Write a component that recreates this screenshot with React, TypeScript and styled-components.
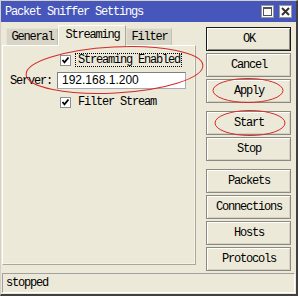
import React from "react";
import styled, { createGlobalStyle } from "styled-components";

const Global = createGlobalStyle`
  html, body { margin: 0; padding: 0; background: #ece9d8; }
  body { width: 298px; height: 296px; overflow: hidden; }
  * { box-sizing: border-box; }
`;

const mono = `"Liberation Mono", "DejaVu Sans Mono", monospace`;

const Window = styled.div`
  position: relative;
  width: 298px;
  height: 296px;
  background: #ece9d8;
  border-top: 1px solid #d4d0c8;
  border-left: 1px solid #d4d0c8;
  border-right: 2px solid #404040;
  border-bottom: 2px solid #404040;
  display: flex;
  flex-direction: column;
  font-family: ${mono};
  font-size: 12px;
  letter-spacing: -1.2px;
  color: #000;
`;

const TitleBar = styled.div`
  height: 21px;
  flex: none;
  background: #4656ba;
  display: flex;
  align-items: center;
  justify-content: space-between;
  padding: 0 4px 0 4px;
  color: #fff;
`;

const TitleText = styled.span`
  font-size: 12px;
  padding-top: 1px;
`;

const TitleButtons = styled.div`
  display: flex;
  gap: 5px;
`;

const TitleButton = styled.div`
  width: 13px;
  height: 13px;
  background: #fff;
  border: 1px solid #9a9a9a;
  display: flex;
  align-items: center;
  justify-content: center;
`;

const Main = styled.div`
  flex: 1;
  display: flex;
  min-height: 0;
`;

const LeftCol = styled.div`
  width: 194px;
  margin-left: 1px;
  display: flex;
  flex-direction: column;
  padding-bottom: 8px;
`;

const Tabs = styled.div`
  height: 23px;
  display: flex;
  align-items: flex-end;
  padding-left: 4px;
  position: relative;
  z-index: 1;
`;

const Tab = styled.div<{ $active?: boolean; $w: number }>`
  width: ${(p) => p.$w}px;
  height: ${(p) => (p.$active ? 21 : 17)}px;
  margin-bottom: ${(p) => (p.$active ? -1 : 0)}px;
  display: flex;
  align-items: center;
  justify-content: center;
  padding-left: 1px;
  background: ${(p) => (p.$active ? "#ece9d8" : "#d8d4c6")};
  border-top: 1px solid ${(p) => (p.$active ? "#ffffff" : "#e6e3d6")};
  border-left: 1px solid ${(p) => (p.$active ? "#ffffff" : "#e6e3d6")};
  border-right: 1px solid ${(p) => (p.$active ? "#aca899" : "#c4c0b2")};
  padding-bottom: ${(p) => (p.$active ? 3 : 0)}px;
`;

const Panel = styled.div`
  flex: 1;
  border-top: 1px solid #ffffff;
  border-left: 1px solid #ffffff;
  border-right: 1px solid #aca899;
  border-bottom: 1px solid #aca899;
  box-shadow: inset -1px -1px 0 #f4f2ea;
  padding-top: 7px;
  display: flex;
  flex-direction: column;
`;

const Row = styled.div<{ $mt?: number; $h: number }>`
  display: grid;
  grid-template-columns: 54px 1fr;
  align-items: center;
  height: ${(p) => p.$h}px;
  margin-top: ${(p) => p.$mt ?? 0}px;
`;

const FieldLabel = styled.span`
  padding-left: 7px;
`;

const CheckWrap = styled.div`
  display: flex;
  align-items: center;
  padding-left: 3px;
  gap: 4px;
`;

const Box = styled.div`
  width: 11px;
  height: 11px;
  background: #fff;
  border: 1px solid #8e8f8f;
  display: flex;
  align-items: center;
  justify-content: center;
`;

const CheckLabel = styled.span<{ $focus?: boolean }>`
  padding: 0 1px 0 2px;
  height: 14px;
  line-height: 13px;
  border: 1px dotted ${(p) => (p.$focus ? "#000" : "transparent")};
`;

const Input = styled.div`
  width: 129px;
  height: 17px;
  background: #fff;
  border: 1px solid #a5acb5;
  border-top-color: #7f7f7f;
  border-left-color: #7f7f7f;
  font-family: "Liberation Sans", Arial, sans-serif;
  font-size: 12px;
  letter-spacing: 0;
  line-height: 15px;
  padding-left: 4px;
`;

const RightCol = styled.div`
  width: 85px;
  margin-left: 10px;
  padding-top: 5px;
  display: flex;
  flex-direction: column;
  gap: 2px;
`;

const Button = styled.div<{ $default?: boolean; $spaced?: boolean }>`
  height: 24px;
  flex: none;
  margin-top: ${(p) => (p.$spaced ? 6 : 0)}px;
  display: flex;
  align-items: center;
  justify-content: center;
  padding-left: 1px;
  background: #ece9d8;
  border: 1px solid ${(p) => (p.$default ? "#1a1a1a" : "#8c8a80")};
  box-shadow: ${(p) =>
    p.$default
      ? "inset 1px 1px 0 #ffffff, inset -1px -1px 0 #8c8a80"
      : "inset 1px 1px 0 #ffffff, inset -1px -1px 0 #d4d0c4"};
`;

const StatusBar = styled.div`
  height: 20px;
  flex: none;
  margin: 0 1px 1px 1px;
  border-top: 1px solid #a0a0a0;
  border-left: 1px solid #a0a0a0;
  border-right: 1px solid #ffffff;
  border-bottom: 1px solid #ffffff;
  display: flex;
  align-items: center;
  padding-left: 3px;
`;

const Overlay = styled.svg`
  position: absolute;
  left: -1px;
  top: -1px;
  pointer-events: none;
`;

const Check = () => (
  <svg width="9" height="9" viewBox="0 0 9 9">
    <path d="M1.5 4 L3.5 6.3 L7.5 1.5" fill="none" stroke="#000" strokeWidth="1.8" />
  </svg>
);

export default function App() {
  return (
    <>
      <Global />
      <Window>
        <TitleBar>
          <TitleText>Packet Sniffer Settings</TitleText>
          <TitleButtons>
            <TitleButton>
              <svg width="9" height="9" viewBox="0 0 9 9">
                <rect x="0.5" y="0.5" width="8" height="8" fill="none" stroke="#555" />
                <rect x="0" y="0" width="9" height="2" fill="#555" />
              </svg>
            </TitleButton>
            <TitleButton>
              <svg width="9" height="9" viewBox="0 0 9 9">
                <path d="M1 1 L8 8 M8 1 L1 8" stroke="#333" strokeWidth="2" />
              </svg>
            </TitleButton>
          </TitleButtons>
        </TitleBar>
        <Main>
          <LeftCol>
            <Tabs>
              <Tab $w={52}>General</Tab>
              <Tab $w={68} $active>
                Streaming
              </Tab>
              <Tab $w={46}>Filter</Tab>
            </Tabs>
            <Panel>
              <Row $h={14}>
                <span />
                <CheckWrap>
                  <Box>
                    <Check />
                  </Box>
                  <CheckLabel $focus>Streaming Enabled</CheckLabel>
                </CheckWrap>
              </Row>
              <Row $h={17} $mt={5}>
                <FieldLabel>Server:</FieldLabel>
                <Input>192.168.1.200</Input>
              </Row>
              <Row $h={14} $mt={6}>
                <span />
                <CheckWrap>
                  <Box>
                    <Check />
                  </Box>
                  <CheckLabel>Filter Stream</CheckLabel>
                </CheckWrap>
              </Row>
            </Panel>
          </LeftCol>
          <RightCol>
            <Button $default>OK</Button>
            <Button>Cancel</Button>
            <Button>Apply</Button>
            <Button $spaced>Start</Button>
            <Button>Stop</Button>
            <Button $spaced>Packets</Button>
            <Button>Connections</Button>
            <Button>Hosts</Button>
            <Button>Protocols</Button>
          </RightCol>
        </Main>
        <StatusBar>stopped</StatusBar>
        <Overlay width="298" height="296" viewBox="0 0 298 296">
          <g fill="none" stroke="#d42a2a" strokeWidth="1">
            <ellipse cx="114.5" cy="70" rx="88.5" ry="23" transform="rotate(-3 114.5 70)" />
            <ellipse cx="248" cy="90.5" rx="35" ry="12" />
            <ellipse cx="250" cy="123" rx="35" ry="12.5" />
          </g>
        </Overlay>
      </Window>
    </>
  );
}
